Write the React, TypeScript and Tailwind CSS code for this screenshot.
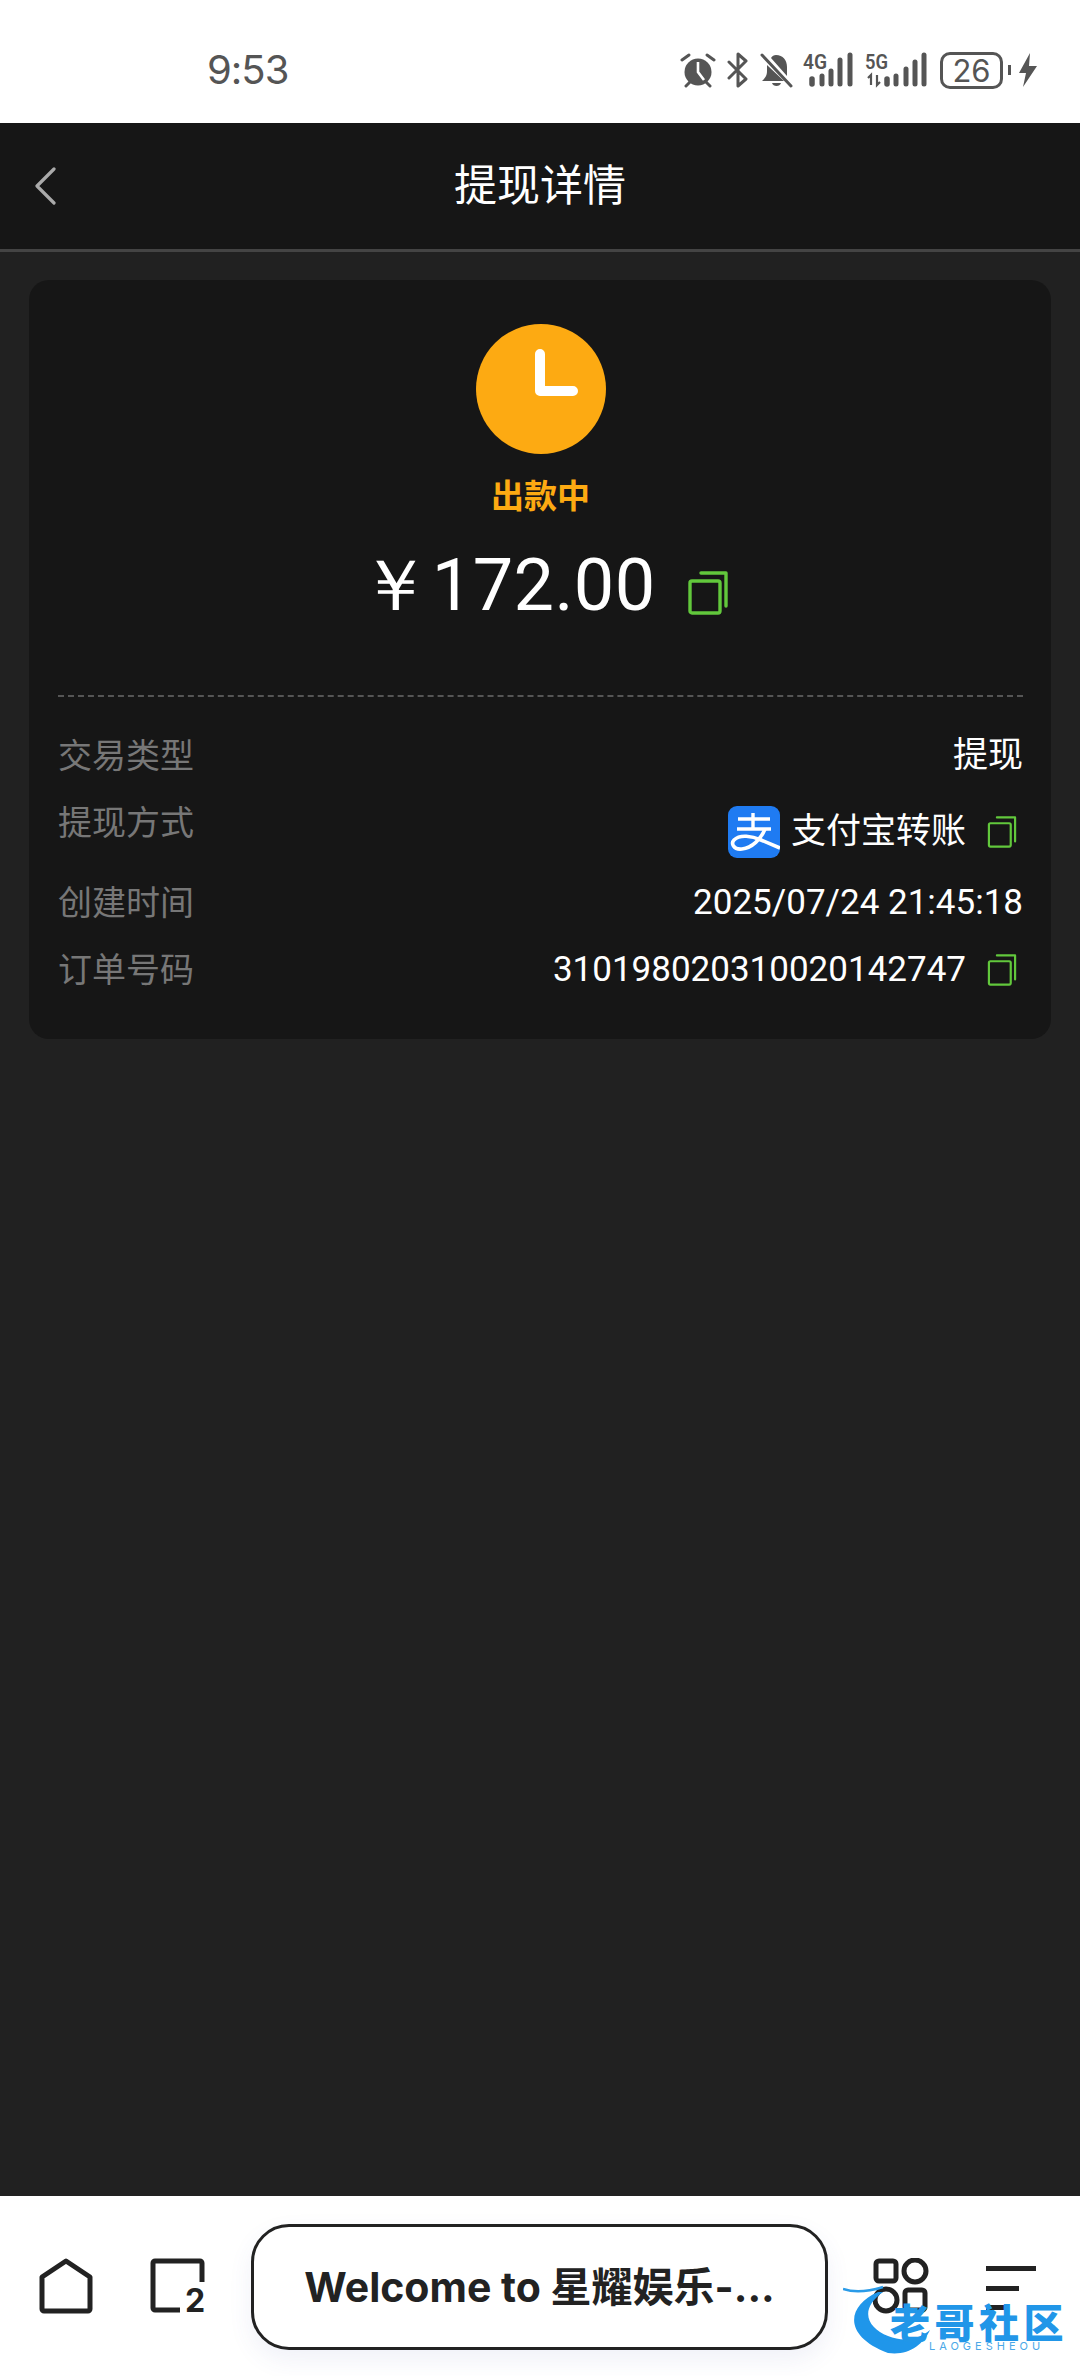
import React from 'react';

const cjk = "font-['Roboto','Noto_Sans_CJK_SC',sans-serif]";

const CopyIcon = ({ size = 32, stroke = 3 }: { size?: number; stroke?: number }) => (
  <svg width={size} height={size} viewBox="0 0 40 44" fill="none" stroke="#62c83c" strokeWidth={stroke}>
    <rect x="2" y="10" width="30" height="32" rx="2" />
    <path d="M13 2h25v33" strokeLinecap="round" strokeLinejoin="round" />
  </svg>
);

const StatusIcons = () => (
  <div className="flex items-center text-[#555555]">
    {/* alarm */}
    <svg width="36" height="36" viewBox="0 0 36 36">
      <circle cx="18" cy="20" r="13.5" fill="#555555" />
      <path d="M18 10v10l6 8" stroke="#fff" strokeWidth="2.6" fill="none" />
      <path d="M2 8l7-5M34 8l-7-5M6 34l4-4M30 34l-4-4" stroke="#555555" strokeWidth="3" strokeLinecap="round" />
    </svg>
    {/* bluetooth off */}
    <svg width="24" height="36" viewBox="0 0 24 36" className="ml-[10px]" fill="none" stroke="#555555" strokeWidth="3">
      <path d="M3 10l17 17-8 7V2l8 7L3 26" strokeLinejoin="round" strokeLinecap="round" />
    </svg>
    {/* bell off */}
    <svg width="34" height="36" viewBox="0 0 34 36" className="ml-[10px]">
      <path d="M16 3c7 0 11 5 11 12v9l-16-18c1-2 3-3 5-3zM7 13l17 16H2c3-3 5-5 5-10z" fill="#555555" />
      <path d="M12 31h9c-1 4-8 4-9 0z" fill="#555555" />
      <path d="M2 3l29 31" stroke="#555555" strokeWidth="3" strokeLinecap="round" />
    </svg>
    {/* 4G */}
    <svg width="52" height="36" viewBox="0 0 52 36" className="ml-[9px] overflow-visible">
      <text x="0" y="17" fontSize="21" fontWeight="600" fontFamily="Roboto, sans-serif" fill="#555555" textLength="24" lengthAdjust="spacingAndGlyphs">4G</text>
      <g stroke="#555555" strokeLinecap="round">
        <path d="M9 27v5" strokeWidth="5.5" />
        <path d="M19 24v8" strokeWidth="5" />
        <path d="M28 19v13" strokeWidth="5" />
        <path d="M37 8v24" strokeWidth="5" />
        <path d="M47 3v29" strokeWidth="5" />
      </g>
    </svg>
    {/* 5G */}
    <svg width="64" height="36" viewBox="0 0 64 36" className="ml-[10px] overflow-visible">
      <text x="0" y="17" fontSize="21" fontWeight="600" fontFamily="Roboto, sans-serif" fill="#555555" textLength="23" lengthAdjust="spacingAndGlyphs">5G</text>
      <path d="M3 26l3-3v10M12 23v10l3-3" stroke="#555555" strokeWidth="2.2" fill="none" />
      <g stroke="#555555" strokeLinecap="round">
        <path d="M22 27v5" strokeWidth="5.5" />
        <path d="M31 24v8" strokeWidth="5" />
        <path d="M41 17v15" strokeWidth="5" />
        <path d="M50 10v22" strokeWidth="5" />
        <path d="M59 3v29" strokeWidth="5" />
      </g>
    </svg>
    {/* battery */}
    <div className="ml-[11px] flex h-[37px] w-[63px] items-center justify-center rounded-[10px] border-[3px] border-[#555555] font-['Inter',sans-serif] text-[31px] leading-none">
      26
    </div>
    <div className="ml-[5px] h-[10px] w-[3px] bg-[#555555]" />
    <svg width="20" height="36" viewBox="0 0 20 36" className="ml-[7px]">
      <path d="M12 1L1 21h7l-3 14L19 14h-8z" fill="#555555" />
    </svg>
  </div>
);

const AlipayLogo = () => (
  <svg width="52" height="52" viewBox="0 0 52 52">
    <rect width="52" height="52" rx="9" fill="#1f7bf2" />
    <path d="M10 13h32M25 7v16M9 23h34" stroke="#fff" strokeWidth="3.4" fill="none" />
    <path d="M37 23C33 33 24 42 14 43 5 44 3 37 6 34c6-6 18-4 27 0l19 8" stroke="#fff" strokeWidth="3.6" fill="none" />
  </svg>
);

const Row = ({ label, className, children }: { label: string; className: string; children: React.ReactNode }) => (
  <div className={`flex justify-between ${className}`}>
    <span className="text-[34px] text-[#777777]">{label}</span>
    {children}
  </div>
);

const Watermark = () => (
  <div className="pointer-events-none absolute left-[843px] top-[84px] h-[76px] w-[225px]">
    <svg width="100" height="76" viewBox="0 0 100 76" className="absolute left-0 top-0">
      <path d="M0 9c12 4 24 3 40-2" stroke="#2a9be8" strokeWidth="2.5" fill="none" />
      <path d="M35 12C5 25-2 55 45 73c20 3 35-8 42-23-12 10-27 12-42 6C25 48 15 30 40 12z" fill="#1f96ea" />
    </svg>
    <div className="absolute left-[47px] top-[23px] whitespace-nowrap font-['Noto_Sans_CJK_SC',sans-serif] text-[40px] font-black leading-[36px] tracking-[4.5px] text-[#2196e8]">
      老哥社区
    </div>
    <div className="absolute left-[86px] top-[61px] whitespace-nowrap font-['Inter',sans-serif] text-[11px] leading-[10px] tracking-[4px] text-[#4aa8e8]">
      LAOGESHEOU
    </div>
  </div>
);

const App: React.FC = () => {
  return (
    <div className={`flex h-[2376px] w-[1080px] flex-col overflow-hidden bg-[#212121] ${cjk}`}>
      {/* 状态栏 */}
      <div className="flex h-[123px] items-center justify-between bg-white pl-[207px] pr-[42px] pt-[17px]">
        <span className="font-['Inter',sans-serif] text-[40px] leading-none tracking-[-1px] text-[#555555]">9:53</span>
        <StatusIcons />
      </div>

      {/* 标题栏 */}
      <div className="relative flex h-[129px] items-center justify-center border-b-[3px] border-[#444444] bg-[#161616]">
        <svg width="24" height="38" viewBox="0 0 24 38" className="absolute left-[33px] top-[44px]" fill="none" stroke="#aaaaaa" strokeWidth="3.2">
          <path d="M21 2L4 19l17 17" strokeLinecap="round" strokeLinejoin="round" />
        </svg>
        <h1 className="text-[43px] font-normal leading-none text-white">提现详情</h1>
      </div>

      {/* 内容 */}
      <div className="flex-1 px-[29px] pt-[28px]">
        <div className="h-[759px] rounded-[20px] bg-[#161616] pl-[29px] pr-[28px] pt-[44px]">
          <div className="flex flex-col items-center">
            <div className="flex h-[130px] w-[130px] items-center justify-center rounded-full bg-[#fdaa12]">
              <svg width="130" height="130" viewBox="0 0 130 130" fill="none" stroke="#fff" strokeWidth="10">
                <path d="M64 30v37h33" strokeLinecap="round" strokeLinejoin="round" />
              </svg>
            </div>
            <div className="mt-[20px] text-[33px] font-bold leading-[46px] text-[#fdaa12]">出款中</div>
            <div className="mt-[24px] flex h-[84px] items-center pl-[8px]">
              <span className="font-['Roboto',sans-serif] text-[72px] leading-none tracking-[0.4px] text-white">￥172.00</span>
              <span className="ml-[30px] mt-[14px] flex">
                <CopyIcon size={44} stroke={3.4} />
              </span>
            </div>
          </div>

          <div className="mt-[67px] border-t-2 border-dashed border-[#555555]" />

          <div className="text-[35px] leading-[48px] text-white">
            <Row label="交易类型" className="mt-[35px]">
              <span>提现</span>
            </Row>
            <Row label="提现方式" className="mt-[19px]">
              <div className="mt-[7px] flex items-center">
                <AlipayLogo />
                <span className="ml-[11px]">支付宝转账</span>
                <span className="ml-[20px] mr-[5px] flex">
                  <CopyIcon />
                </span>
              </div>
            </Row>
            <Row label="创建时间" className="mt-[21px]">
              <span>2025/07/24 21:45:18</span>
            </Row>
            <Row label="订单号码" className="mt-[19px]">
              <div className="flex items-center">
                <span>310198020310020142747</span>
                <span className="ml-[20px] mr-[5px] flex">
                  <CopyIcon />
                </span>
              </div>
            </Row>
          </div>
        </div>
      </div>

      {/* 底部栏 */}
      <div className="relative flex h-[180px] items-start bg-white pt-[28px]">
        <svg width="56" height="56" viewBox="0 0 56 56" className="ml-[39px] mt-[34px]" fill="none" stroke="#222222" strokeWidth="5">
          <path d="M27 3L3 19v32c0 1 1 2 2 2h44c1 0 2-1 2-2V19z" strokeLinejoin="round" />
        </svg>
        <svg width="56" height="56" viewBox="0 0 56 56" className="ml-[55px] mt-[34px] overflow-visible" fill="none" stroke="#222222" strokeWidth="5">
          <path d="M30 52H5c-1 0-2-1-2-2V5c0-1 1-2 2-2h45c1 0 2 1 2 2v19" strokeLinejoin="round" />
          <text x="35" y="54" fontSize="32" fontWeight="700" fontFamily="Inter, sans-serif" fill="#222222" stroke="none">2</text>
        </svg>
        <div className="ml-[45px] flex h-[126px] w-[577px] items-center justify-center rounded-[38px] border-[3px] border-[#222222] bg-white shadow-[0_10px_24px_rgba(70,80,160,0.08)]">
          <span className="font-['Inter','Noto_Sans_CJK_SC',sans-serif] text-[41px] font-bold leading-none text-[#222222]">Welcome to 星耀娱乐-...</span>
        </div>
        <svg width="56" height="56" viewBox="0 0 56 56" className="ml-[45px] mt-[34px]" fill="none" stroke="#222222" strokeWidth="5">
          <rect x="3" y="3" width="20" height="20" rx="3" />
          <circle cx="42" cy="13" r="11" />
          <circle cx="13" cy="42" r="11" />
          <rect x="32" y="32" width="20" height="20" rx="3" />
        </svg>
        <svg width="50" height="56" viewBox="0 0 50 56" className="ml-[57px] mt-[34px]" fill="#222222">
          <rect x="0" y="8" width="50" height="5" />
          <rect x="0" y="28" width="33" height="5" />
          <rect x="0" y="47" width="19" height="5" />
        </svg>
        <Watermark />
      </div>
    </div>
  );
};

export default App;
